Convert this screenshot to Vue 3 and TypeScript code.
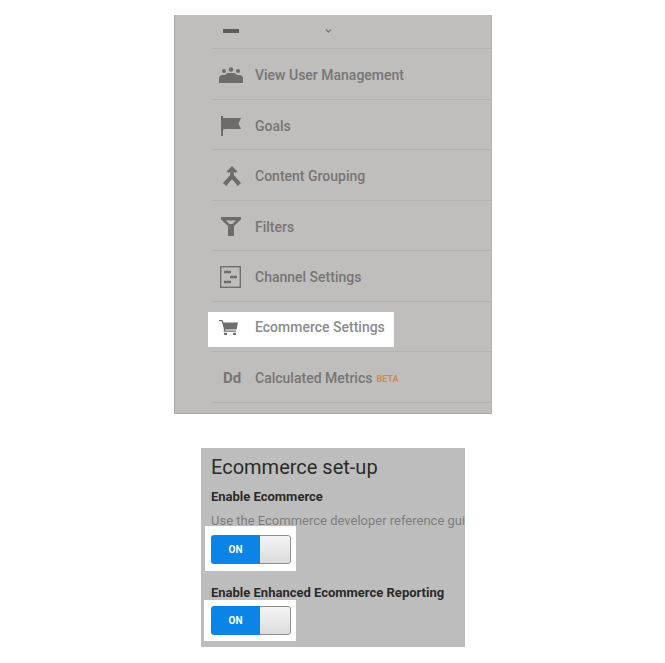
<script setup lang="ts">
interface Row {
  label: string
  icon: string
  active?: boolean
  beta?: boolean
}

const rows: Row[] = [
  { label: 'View User Management', icon: 'users' },
  { label: 'Goals', icon: 'flag' },
  { label: 'Content Grouping', icon: 'group' },
  { label: 'Filters', icon: 'filter' },
  { label: 'Channel Settings', icon: 'channel' },
  { label: 'Ecommerce Settings', icon: 'cart', active: true },
  { label: 'Calculated Metrics', icon: 'dd', beta: true },
]
</script>

<template>
  <div class="page">
    <section class="menu">
      <div class="top-row">
        <span class="dash"></span>
        <svg class="chevron" width="7" height="4" viewBox="0 0 7 4"><path d="M1 .5l2.500 2.500L6 .5" fill="none" stroke="#777" stroke-width="1.300" /></svg>
      </div>
      <div v-for="row in rows" :key="row.label" class="row" :class="{ 'row-active': row.active }">
        <div class="row-inner" :class="{ active: row.active }">
          <span class="icon">
            <svg v-if="row.icon === 'users'" width="24" height="16" viewBox="0 0 24 16" fill="#6e6b6b">
              <circle cx="12" cy="2.500" r="2.300" /><circle cx="5" cy="4" r="2" /><circle cx="19" cy="4" r="2" />
              <path d="M0 16v-4.500C0 9.500 1.500 8 3.500 8h2.200c.8 0 1.400-1.500 3-2h6.600c1.600.5 2.200 2 3 2h2.200c2 0 3.500 1.500 3.500 3.500V16z" />
            </svg>
            <svg v-else-if="row.icon === 'flag'" class="ic-flag" width="20" height="20" viewBox="0 0 20 20" fill="#6e6b6b">
              <rect x="0" y="0" width="2" height="20" /><path d="M2 2h18l-2.500 5.500L20 13H5c-1.300 0-2.300.4-3 1z" />
            </svg>
            <svg v-else-if="row.icon === 'group'" class="ic-group" width="18" height="20" viewBox="0 0 18 20" fill="#6e6b6b">
              <path d="M9 0l5.500 5.500-2 1.500L10.800 5.500v3.500L18 17l-3.200 3L9 13.300 3.200 20 0 17l7.200-8V5.500L5.500 7l-2-1.500z" />
            </svg>
            <svg v-else-if="row.icon === 'filter'" class="ic-filter" width="20" height="19" viewBox="0 0 20 19" fill="#6e6b6b">
              <path fill-rule="evenodd" d="M0 0h20v2.500l-7 6.500v10H7V9L0 2.500zM5 3.500l3.500 3.500h3L15 3.500z" />
            </svg>
            <svg v-else-if="row.icon === 'channel'" class="ic-channel" width="21" height="22" viewBox="0 0 21 22" fill="none" stroke="#716e6e">
              <rect x=".7" y=".7" width="19.600" height="20.600" stroke-width="1.400" />
              <path d="M4 6h7M10 11h7M4 16h7" stroke-width="2.400" />
            </svg>
            <svg v-else-if="row.icon === 'cart'" class="ic-cart" width="19" height="15" viewBox="0 0 19 15" fill="#706d6d">
              <path d="M0 0h3.500l1 2.500H19l-1.500 7H6.500l-.3 1H17v1.200H4.500L5 9.500 2.800 1.200H0z" />
              <rect x="5" y="12.800" width="3" height="2.200" /><rect x="14" y="12.800" width="3" height="2.200" />
            </svg>
            <span v-else class="dd">Dd</span>
          </span>
          <span class="label">{{ row.label }}</span>
          <span v-if="row.beta" class="beta">BETA</span>
        </div>
      </div>
    </section>

    <section class="setup">
      <h2>Ecommerce set-up</h2>
      <h3>Enable Ecommerce</h3>
      <p>Use the Ecommerce developer reference gui</p>
      <div class="toggle-wrap">
        <div class="toggle"><span class="on">ON</span><span class="knob"></span></div>
      </div>
      <h3 class="second">Enable Enhanced Ecommerce Reporting</h3>
      <div class="toggle-wrap tight">
        <div class="toggle"><span class="on">ON</span><span class="knob"></span></div>
      </div>
    </section>
  </div>
</template>

<style>
html, body {
  background: #fff;
}
</style>

<style scoped>
.page {
  width: 665px;
  height: 663px;
  overflow: hidden;
  font-family: Roboto, "Liberation Sans", sans-serif;
  padding-top: 15px;
  box-sizing: border-box;
}

.menu {
  width: 318px;
  height: 399px;
  margin-left: 174px;
  background: #c0bdbd;
  border-left: 1px solid #a9a6a6;
  border-right: 1px solid #b5b2b2;
  border-bottom: 1px solid #a9a6a6;
  box-sizing: border-box;
  padding-left: 37px;
  overflow: hidden;
}

.top-row {
  height: 34px;
  display: flex;
  align-items: center;
  border-bottom: 1px solid #b6b2b2;
  box-sizing: border-box;
  padding: 0 0 2px 11px;
  gap: 86px;
}

.dash {
  width: 16px;
  height: 4px;
  background: #5f5c5c;
}

.row {
  height: 50.500px;
  border-bottom: 1px solid #b6b2b2;
  box-sizing: border-box;
  display: flex;
  align-items: center;
  padding-top: 3px;
}

.row-active {
  padding-top: 7px;
}

.row-inner {
  display: flex;
  align-items: center;
  height: 35px;
  color: #787575;
}

.row-inner.active {
  width: 186px;
  margin-left: -4px;
  background: #fff;
  color: #8e8b8b;
}

.icon {
  width: 43px;
  flex: none;
  display: flex;
  padding-left: 7px;
  box-sizing: border-box;
}

.row-inner.active .icon {
  width: 47px;
  padding-left: 11px;
  margin-top: -5px;
}

.row-inner.active .label {
  margin-top: -5px;
}

.ic-flag,
.ic-filter {
  margin-left: 2px;
}

.ic-group {
  margin-left: 4px;
}

.ic-channel {
  margin-left: 1px;
}

.label {
  font-size: 14px;
  font-weight: 500;
  white-space: nowrap;
}

.dd {
  font-size: 15px;
  font-weight: 700;
  padding-left: 4px;
}

.beta {
  margin-left: 4px;
  margin-top: 2px;
  font-size: 9px;
  font-weight: 700;
  color: #c98a58;
}

.setup {
  width: 264px;
  height: 199px;
  margin: 34px 0 0 201px;
  background: #bdbdbd;
  padding: 8px 0 0 10px;
  box-sizing: border-box;
  overflow: hidden;
  color: #2b2b2b;
}

h2 {
  margin: 0;
  font-size: 20px;
  font-weight: 400;
  line-height: 22px;
}

h3 {
  margin: 11px 0 0;
  font-size: 13px;
  font-weight: 700;
  line-height: 15px;
}

h3.second {
  margin-top: 14px;
}

p {
  margin: 9px 0 0;
  font-size: 13px;
  line-height: 15px;
  color: #7d7d7d;
  white-space: nowrap;
}

.toggle-wrap {
  width: 91px;
  height: 45px;
  margin: -2px 0 0 -6px;
  background: #fff;
  display: flex;
  align-items: center;
  padding: 2px 0 0 6px;
  box-sizing: border-box;
}

.toggle-wrap.tight {
  height: 41px;
  margin: 0 0 0 -7px;
  padding: 0 0 0 7px;
  width: 92px;
}

.toggle {
  width: 80px;
  height: 29px;
  display: flex;
  border-radius: 3px;
  overflow: hidden;
}

.on {
  width: 49px;
  background: #0a84e6;
  color: #fff;
  font-size: 10px;
  font-weight: 700;
  display: flex;
  align-items: center;
  justify-content: center;
}

.knob {
  flex: 1;
  background: linear-gradient(#f4f4f4, #dcdcdc);
  border: 1px solid #8f8f8f;
  border-left: none;
  border-radius: 0 3px 3px 0;
}
</style>
